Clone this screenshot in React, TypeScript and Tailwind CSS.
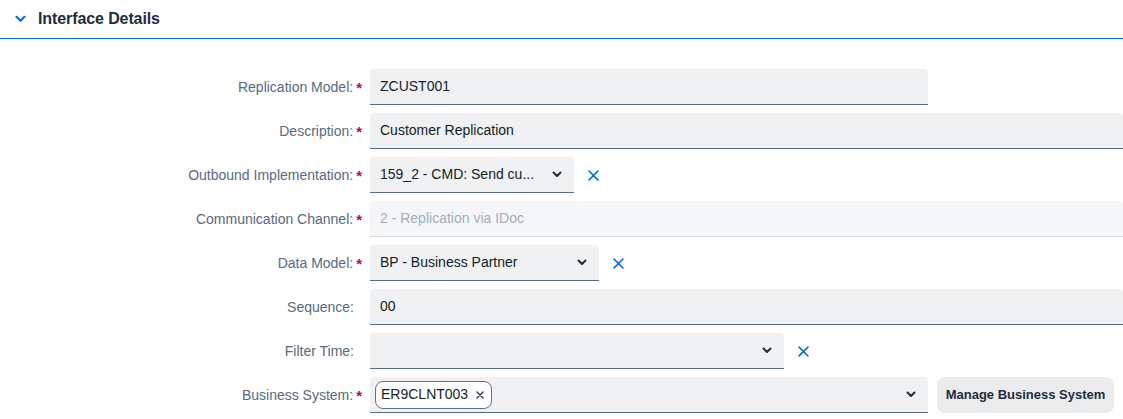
import type { ReactNode } from 'react'

const FONT = { fontFamily: '"Liberation Sans", Arial, sans-serif' }

function Chevron() {
  return (
    <svg width="10" height="7" viewBox="0 0 10 7" className="shrink-0">
      <path d="M1.5 1.5 L5 5 L8.5 1.5" fill="none" stroke="#1d2d3e" strokeWidth="2" strokeLinecap="round" strokeLinejoin="round" />
    </svg>
  )
}

function ClearX() {
  return (
    <svg width="11" height="11" viewBox="0 0 11 11" className="shrink-0">
      <path d="M1 1 L10 10 M10 1 L1 10" stroke="#0064d9" strokeWidth="1.6" strokeLinecap="round" />
    </svg>
  )
}

type RowProps = {
  label: string
  required?: boolean
  children: ReactNode
}

function Row({ label, required, children }: RowProps) {
  return (
    <div className="flex h-9 items-center">
      <div className={`flex w-[362px] shrink-0 items-center justify-end text-[14px] text-[#556b82] ${required ? '' : 'pr-2'}`}>
        <span>{label}:</span>
        {required && <span className="ml-[3px] text-[15px] font-bold leading-none text-[#ba066c]">*</span>}
      </div>
      <div className="ml-2 flex h-9 min-w-0 flex-1 items-center">{children}</div>
    </div>
  )
}

function Field({ value, width, disabled }: { value: string; width?: string; disabled?: boolean }) {
  return (
    <div
      className={`flex h-9 items-center rounded-t-[4px] border-b px-[10px] text-[14px] ${
        disabled ? 'border-[#d3d8dd] bg-[#f5f6f7] text-[#a3aeb9]' : 'border-[#556b82] bg-[#eff1f2] text-[#131e29]'
      } ${width ?? 'flex-1'}`}
    >
      {value}
    </div>
  )
}

function Select({ value, width, clear }: { value: ReactNode; width: string; clear?: boolean }) {
  return (
    <div className="flex items-center">
      <div className={`flex h-9 shrink-0 items-center justify-between rounded-t-[4px] border-b border-[#556b82] bg-[#eff1f2] pl-[10px] pr-[12px] text-[14px] text-[#131e29] ${width}`}>
        <div className="flex min-w-0 items-center">{value}</div>
        <Chevron />
      </div>
      {clear && (
        <div className="ml-[14px] flex items-center">
          <ClearX />
        </div>
      )}
    </div>
  )
}

export default function App() {
  return (
    <div className="min-h-screen bg-white" style={FONT}>
      <div className="flex h-[39px] items-center gap-[12px] border-b border-[#0070f2] pl-[15px]">
        <svg width="11" height="8" viewBox="0 0 11 8">
          <path d="M1.5 1.8 L5.5 5.8 L9.5 1.8" fill="none" stroke="#0070f2" strokeWidth="2.2" strokeLinecap="round" strokeLinejoin="round" />
        </svg>
        <h2 className="text-[16px] font-bold tracking-[-0.1px] text-[#1d2d3e]">Interface Details</h2>
      </div>

      <div className="flex flex-col gap-2 pt-[30px]">
        <Row label="Replication Model" required>
          <Field value="ZCUST001" width="w-[558px]" />
        </Row>
        <Row label="Description" required>
          <Field value="Customer Replication" />
        </Row>
        <Row label="Outbound Implementation" required>
          <Select value="159_2 - CMD: Send cu..." width="w-[204px]" clear />
        </Row>
        <Row label="Communication Channel" required>
          <Field value="2 - Replication via IDoc" disabled />
        </Row>
        <Row label="Data Model" required>
          <Select value="BP - Business Partner" width="w-[229px]" clear />
        </Row>
        <Row label="Sequence">
          <Field value="00" />
        </Row>
        <Row label="Filter Time">
          <Select value="" width="w-[414px]" clear />
        </Row>
        <Row label="Business System" required>
          <div className="flex items-center">
            <div className="flex h-9 w-[558px] shrink-0 items-center justify-between rounded-t-[4px] border-b border-[#556b82] bg-[#eff1f2] pl-[5px] pr-[12px]">
              <span className="flex h-[28px] items-center gap-[8px] rounded-[8px] border border-[#5b738b] bg-white pl-[5px] pr-[7px] text-[14px] text-[#131e29]">
                ER9CLNT003
                <svg width="8" height="8" viewBox="0 0 8 8">
                  <path d="M1 1 L7 7 M7 1 L1 7" stroke="#1d2d3e" strokeWidth="1.3" strokeLinecap="round" />
                </svg>
              </span>
              <Chevron />
            </div>
            <button className="ml-[9px] flex h-9 w-[177px] shrink-0 items-center justify-center whitespace-nowrap rounded-[8px] bg-[#eaecee] text-[13px] font-bold text-[#1d2d3e]">
              Manage Business System
            </button>
          </div>
        </Row>
      </div>
    </div>
  )
}
